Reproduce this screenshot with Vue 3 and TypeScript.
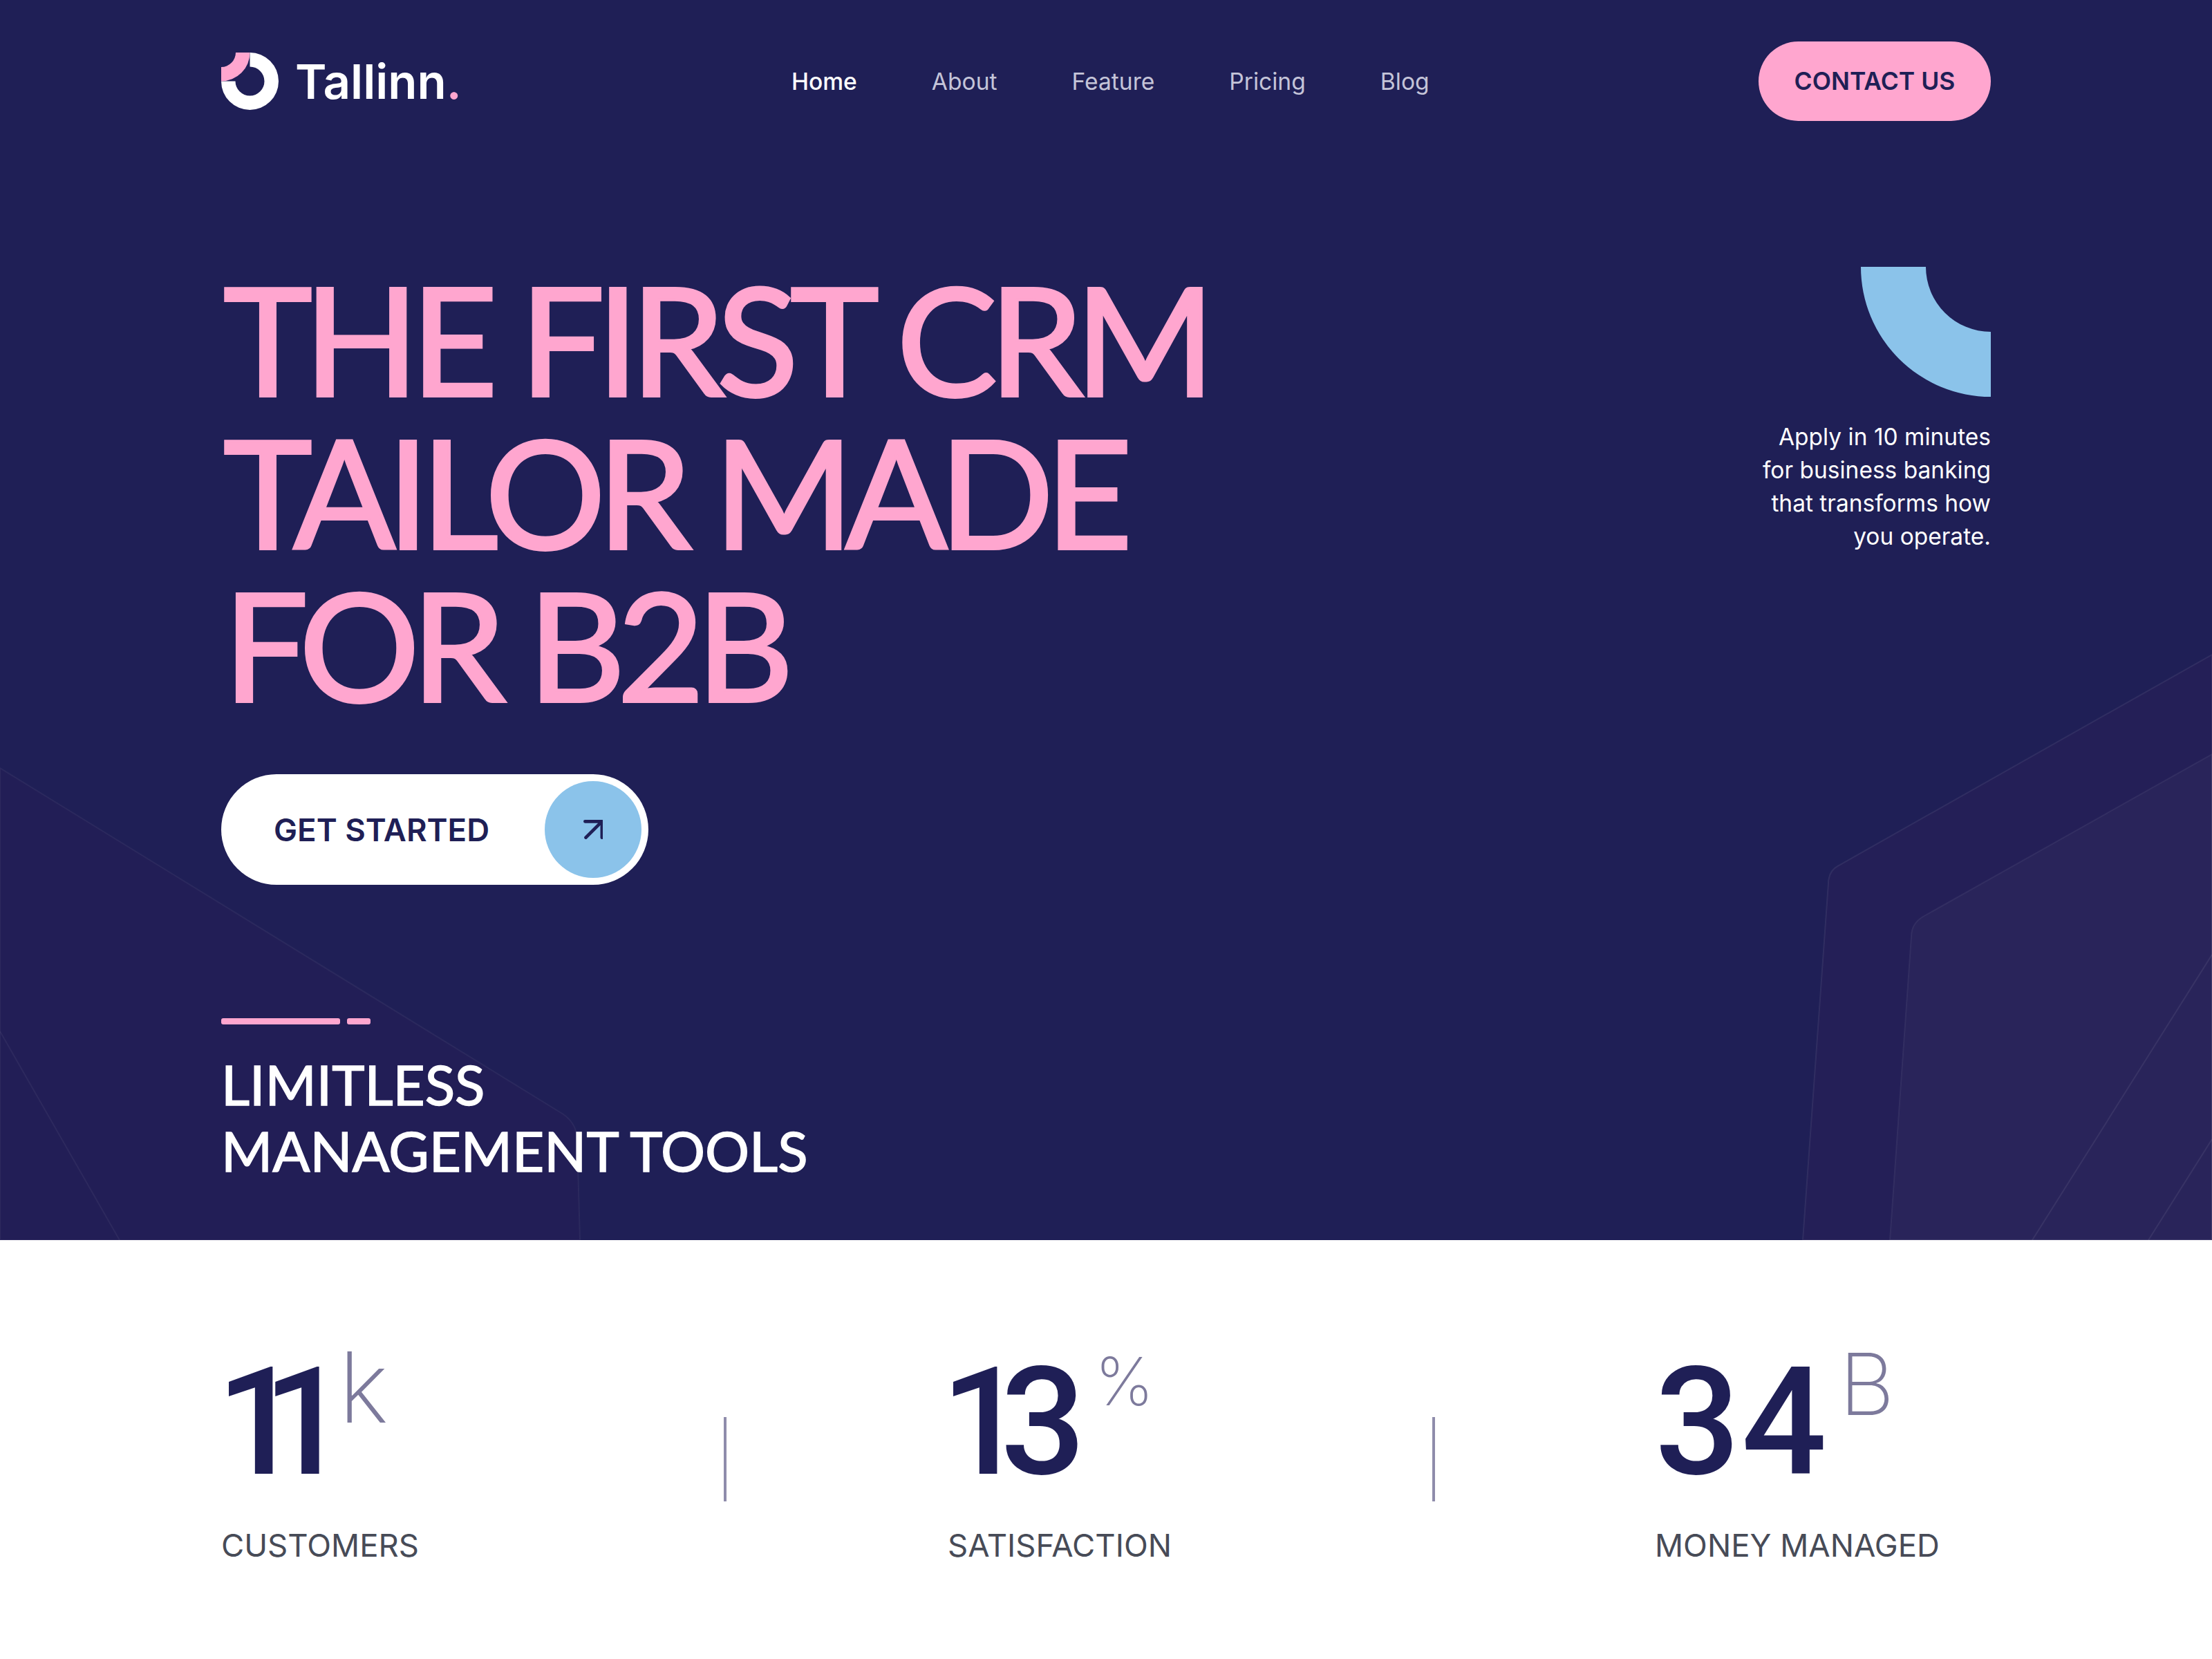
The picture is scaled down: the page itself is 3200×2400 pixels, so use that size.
<script setup lang="ts">
interface Stat {
  value: string
  unit: string
  label: string
}

const navLinks = ['Home', 'About', 'Feature', 'Pricing', 'Blog']

const stats: Stat[] = [
  { value: '11', unit: 'k', label: 'CUSTOMERS' },
  { value: '13', unit: '%', label: 'SATISFACTION' },
  { value: '34', unit: 'B', label: 'MONEY MANAGED' }
]
</script>

<template>
  <div class="page">
    <section class="hero">
      <!-- background shapes -->
      <svg class="hero-bg" viewBox="0 0 3200 1794" width="3200" height="1794" fill="none">
        <path d="M0 1111 L815 1612 Q835 1626 835 1650 L839 1794 L0 1794 Z" fill="#2a1f55" fill-opacity="0.3" stroke="#fff" stroke-opacity="0.05" stroke-width="2" />
        <path d="M0 1492 L173 1794" stroke="#fff" stroke-opacity="0.05" stroke-width="2" />
        <path d="M3200 947 L2660 1252 Q2645 1260 2645 1278 L2608 1794 L3200 1794 Z" fill="#2a1f58" fill-opacity="0.45" stroke="#fff" stroke-opacity="0.07" stroke-width="2" />
        <path d="M3200 1091 L2782 1326 Q2765 1336 2765 1355 L2734 1794 L3200 1794 Z" fill="#fff" fill-opacity="0.025" stroke="#fff" stroke-opacity="0.06" stroke-width="2" />
        <path d="M3200 1381 L2940 1794 M3200 1648 L3108 1794" stroke="#fff" stroke-opacity="0.07" stroke-width="2" />
      </svg>

      <header class="topbar">
        <a class="brand">
          <svg class="brand-mark" viewBox="0 0 83 83" width="83" height="83">
            <path d="M41.5 0 A41.5 41.5 0 1 1 0 41.5 L20.5 41.5 A21 21 0 1 0 41.5 20.5 Z" fill="#fff" />
            <path d="M21 0 L41.5 0 A41.5 41.5 0 0 1 0 41.5 L0 21 A21 21 0 0 0 21 0 Z" fill="#ffa6cf" />
          </svg>
          <span class="brand-name">Tallinn<span class="brand-dot">.</span></span>
        </a>
        <nav class="nav">
          <a v-for="(link, i) in navLinks" :key="link" :class="{ active: i === 0 }">{{ link }}</a>
        </nav>
        <button class="contact">CONTACT US</button>
      </header>

      <div class="hero-body">
        <div class="hero-left">
          <h1>THE FIRST CRM<br>TAILOR MADE<br>FOR B2B</h1>
          <button class="start">
            <span>GET STARTED</span>
            <span class="start-icon">
              <svg viewBox="0 0 24 24" width="28" height="28" fill="none" stroke="#1f1f56" stroke-width="4" stroke-linecap="round" stroke-linejoin="round">
                <path d="M2 2 H23 V22 M23 2 L3 22" />
              </svg>
            </span>
          </button>
          <div class="bars"><i class="bar-long"></i><i class="bar-short"></i></div>
          <h2>LIMITLESS<br>MANAGEMENT TOOLS</h2>
        </div>
        <aside class="hero-side">
          <svg viewBox="0 0 188 188" width="188" height="188">
            <path d="M0 0 H94 A94 94 0 0 0 188 94 V188 A188 188 0 0 1 0 0 Z" fill="#8bc3ea" />
          </svg>
          <p>Apply in 10 minutes<br>for business banking<br>that transforms how<br>you operate.</p>
        </aside>
      </div>
    </section>

    <section class="stats">
      <template v-for="(stat, i) in stats" :key="stat.label">
        <div class="divider" v-if="i > 0"></div>
        <div class="stat" :class="'stat-' + i">
          <div class="stat-figure">
            <span class="stat-value">{{ stat.value }}</span>
            <span class="stat-unit">{{ stat.unit }}</span>
          </div>
          <div class="stat-label">{{ stat.label }}</div>
        </div>
      </template>
    </section>
  </div>
</template>

<style>
html,
body {
  margin: 0;
  background: #fff;
}
</style>

<style scoped>
.page {
  width: 3200px;
  height: 2400px;
  font-family: Inter, "Liberation Sans", sans-serif;
  overflow: hidden;
}

.hero {
  position: relative;
  height: 1794px;
  padding: 60px 320px 0;
  box-sizing: border-box;
  background: #1f1f56;
  overflow: hidden;
}

.hero-bg {
  position: absolute;
  left: 0;
  top: 0;
}

.topbar,
.hero-body {
  position: relative;
}

.topbar {
  display: flex;
  align-items: center;
  height: 115px;
}

.brand {
  display: flex;
  align-items: center;
  gap: 24px;
  width: 825px;
}

.brand-name {
  font-size: 69px;
  font-weight: 600;
  color: #fff;
}

.brand-dot {
  color: #ffa6cf;
}

.nav {
  display: flex;
  gap: 108px;
  font-size: 33.6px;
  color: #c4c4d8;
}

.nav .active {
  color: #fff;
  font-weight: 500;
}

.contact {
  margin-left: auto;
  width: 336px;
  height: 115px;
  border: none;
  border-radius: 58px;
  background: #ffa6cf;
  color: #1f1f56;
  font-family: inherit;
  font-size: 35.5px;
  font-weight: 600;
}

.hero-body {
  display: flex;
  justify-content: space-between;
}

.hero-left {
  padding-top: 203px;
}

h1 {
  margin: 0 0 0 3px;
  font-family: Lato, sans-serif;
  font-size: 218px;
  line-height: 221px;
  font-weight: 400;
  letter-spacing: -12px;
  -webkit-text-stroke: 4px #ffa6cf;
  color: #ffa6cf;
}

.start {
  display: flex;
  align-items: center;
  justify-content: space-between;
  width: 618px;
  height: 160px;
  margin-top: 79px;
  padding: 0 10px 0 76px;
  box-sizing: border-box;
  border: none;
  border-radius: 80px;
  background: #fff;
  color: #1f1f56;
  font-family: inherit;
  font-size: 45.5px;
  font-weight: 600;
}

.start-icon {
  display: flex;
  align-items: center;
  justify-content: center;
  width: 140px;
  height: 140px;
  border-radius: 50%;
  background: #8bc3ea;
}

.bars {
  display: flex;
  gap: 10px;
  margin-top: 193px;
}

.bars i {
  height: 9px;
  border-radius: 3px;
  background: #ffa6cf;
}

.bar-long {
  width: 172px;
}

.bar-short {
  width: 34px;
}

h2 {
  margin: 38px 0 0;
  font-family: Lato, sans-serif;
  font-size: 80px;
  line-height: 96px;
  font-weight: 400;
  -webkit-text-stroke: 1.5px #fff;
  color: #fff;
}

.hero-side {
  display: flex;
  flex-direction: column;
  align-items: flex-end;
  padding-top: 211px;
}

.hero-side p {
  margin: 34px 0 0;
  font-size: 33.5px;
  line-height: 48px;
  text-align: right;
  color: #fff;
}

.stats {
  display: flex;
  height: 606px;
  padding: 0 320px;
  box-sizing: border-box;
  background: #fff;
}

.divider {
  width: 4px;
  height: 122px;
  margin-top: 256px;
  background: #8f8cab;
}

.stat {
  padding-top: 150px;
}

.stat-0 {
  width: 727px;
}

.stat-1 {
  width: 1021px;
  padding-left: 320px;
  box-sizing: border-box;
}

.stat-2 {
  padding-left: 318px;
}

.stat-figure {
  display: flex;
  align-items: flex-start;
  height: 220px;
}

.stat-0 .stat-figure {
  gap: 42px;
}

.stat-1 .stat-figure {
  gap: 50px;
}

.stat-2 .stat-figure {
  gap: 16px;
}

.stat-value {
  margin-top: 4px;
  font-family: Roboto, sans-serif;
  font-size: 217px;
  line-height: 220px;
  font-weight: 500;
  color: #1f1f56;
}

.stat-0 .stat-value {
  margin-left: -7px;
  letter-spacing: -56px;
}

.stat-1 .stat-value {
  margin-left: -10px;
  letter-spacing: -37px;
}

.stat-2 .stat-value {
  letter-spacing: 2px;
}

.stat-unit {
  font-size: 124px;
  line-height: 124px;
  font-weight: 200;
  color: #7d7a9c;
}

.stat-0 .stat-unit {
  font-size: 142px;
}

.stat-1 .stat-unit {
  font-size: 96px;
  margin-top: -8px;
}

.stat-2 .stat-unit {
  margin-top: -4px;
}

.stat-label {
  margin-top: 42px;
  font-size: 45.5px;
  line-height: 60px;
  color: #474b57;
}
</style>
